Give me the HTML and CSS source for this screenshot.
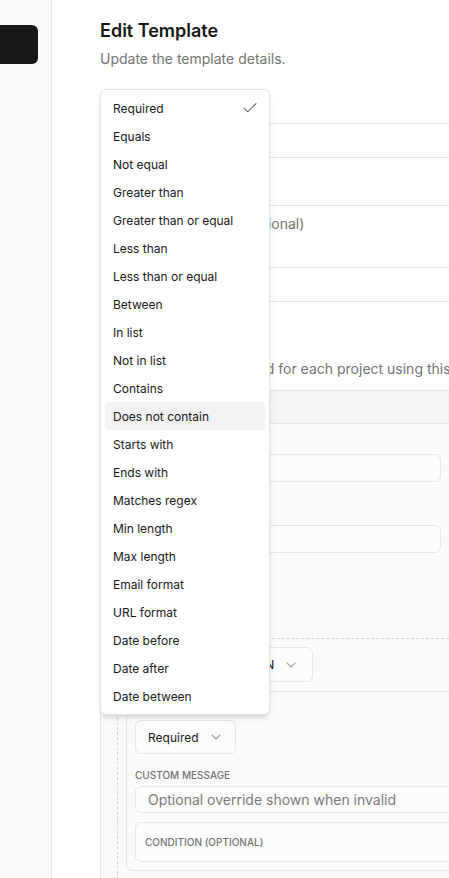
FILE: index.html
```html
<!DOCTYPE html>
<html lang="en">
<head>
  <meta charset="UTF-8" />
  <meta name="viewport" content="width=device-width, initial-scale=1.0"/>
  <title>Edit Template</title>
  <link rel="stylesheet" href="styles.css">
</head>
<body>
  <div class="app">
    <aside class="sidebar">
      <div class="brand"></div>
    </aside>

    <main class="main">
      <div class="panel">
        <h2 class="title">Edit Template</h2>
        <p class="subtitle">Update the template details.</p>

        <form class="form">
          <div class="field">
            <label>Name</label>
            <input class="input" value="Tax Filing" />
          </div>
          <div class="field">
            <label>Description</label>
            <textarea class="input textarea" placeholder="Enter a description (optional)"></textarea>
          </div>

          <section class="fields-section">
            <h3>Template Fields</h3>
            <p class="muted">Template fields to be filled for each project using this template.</p>

            <div class="card">
              <div class="card-head">Field 1</div>
              <div class="card-body">
                <div class="grid">
                  <div class="field small"><label>Label</label><input class="input sm" /></div>
                  <div class="field small"><label>Type</label><input class="input sm" /></div>
                  <div class="field small"><label>Key</label><input class="input sm" /></div>
                  <div class="field small"><label>Default</label><input class="input sm" /></div>
                </div>

                <label class="check-row"><input type="checkbox" /> Required field</label>
                <div class="section-label">Validation rules</div>

                <div class="rule-group">
                  <div class="select">
                    <span>ON FORM SUBMISSION</span>
                    <svg class="chev" width="16" height="16" viewBox="0 0 24 24" fill="none" stroke="currentColor" stroke-width="1.6" stroke-linecap="round" stroke-linejoin="round"><path d="m6 9 6 6 6-6"/></svg>
                  </div>

                  <div class="rule-card">
                    <div class="mini-label">Rule</div>
                    <div class="select rule-select">
                      <span>Required</span>
                      <svg class="chev" width="16" height="16" viewBox="0 0 24 24" fill="none" stroke="currentColor" stroke-width="1.6" stroke-linecap="round" stroke-linejoin="round"><path d="m6 9 6 6 6-6"/></svg>
                    </div>
                    <div class="mini-label msg-label">Custom message</div>
                    <input class="input msg" placeholder="Optional override shown when invalid" />
                    <div class="condition">
                      <div class="mini-label">Condition (optional)</div>
                    </div>
                  </div>
                </div>
              </div>
            </div>
          </section>
        </form>

        <ul class="menu">
          <li>Required
            <svg class="check" width="18" height="18" viewBox="0 0 24 24" fill="none" stroke="currentColor" stroke-width="1.4" stroke-linecap="round" stroke-linejoin="round"><path d="M20 6 9 17l-5-5"/></svg>
          </li>
          <li>Equals</li>
          <li>Not equal</li>
          <li>Greater than</li>
          <li>Greater than or equal</li>
          <li>Less than</li>
          <li>Less than or equal</li>
          <li>Between</li>
          <li>In list</li>
          <li>Not in list</li>
          <li>Contains</li>
          <li class="active">Does not contain</li>
          <li>Starts with</li>
          <li>Ends with</li>
          <li>Matches regex</li>
          <li>Min length</li>
          <li>Max length</li>
          <li>Email format</li>
          <li>URL format</li>
          <li>Date before</li>
          <li>Date after</li>
          <li>Date between</li>
        </ul>
      </div>
    </main>
  </div>
</body>
</html>
```

FILE: styles.css
```css
* {
  box-sizing: border-box;
}
html, body {
  margin: 0;
}
body {
  font-family: Inter, "Noto Sans", sans-serif;
  color: #171717;
  background: #fff;
  overflow: hidden;
}
.app {
  display: flex;
  height: 878px;
}
.sidebar {
  width: 52px;
  flex: none;
  background: #fafafa;
  border-right: 1px solid #e5e5e5;
  padding-top: 25px;
}
.brand {
  width: 48px;
  height: 39px;
  margin-left: -10px;
  background: #171717;
  border-radius: 6px;
}
.main {
  flex: none;
  padding: 17px 0 0 48px;
}
.panel {
  width: 700px;
  position: relative;
}
.title {
  margin: 0;
  font-size: 18px;
  line-height: 28px;
  font-weight: 600;
}
.subtitle {
  margin: 4px 0 0;
  font-size: 14px;
  line-height: 20px;
  color: #737373;
}
.form {
  margin-top: 26px;
}
.field label {
  display: block;
  font-size: 14px;
  font-weight: 500;
  line-height: 20px;
  margin-bottom: 8px;
}
.field + .field {
  margin-top: 19px;
}
.input {
  display: block;
  width: 100%;
  height: 35px;
  border: 1px solid #e5e5e5;
  border-radius: 6px;
  padding: 0 12px;
  font: inherit;
  font-size: 14px;
  color: #171717;
  background: #fff;
}
.input::placeholder {
  color: #737373;
}
.textarea {
  height: 63px;
  padding: 8px 12px;
  line-height: 20px;
  resize: none;
}
.fields-section {
  margin-top: 33px;
  border-top: 1px solid #e5e5e5;
  padding-top: 35px;
}
.fields-section h3 {
  margin: 0;
  font-size: 14px;
  line-height: 20px;
  font-weight: 600;
}
.muted {
  margin: 2px 0 0;
  font-size: 14px;
  line-height: 20px;
  color: #737373;
  white-space: nowrap;
}
.card {
  margin-top: 11px;
  border: 1px solid #e5e5e5;
  border-radius: 8px;
  background: #fafafa;
  overflow: hidden;
}
.card-head {
  height: 33px;
  background: #f5f5f5;
  border-bottom: 1px solid #e5e5e5;
  padding: 0 12px;
  display: flex;
  align-items: center;
  font-size: 12px;
  font-weight: 500;
}
.card-body {
  padding: 12px 16px 16px;
}
.grid {
  display: grid;
  grid-template-columns: 324px 324px;
  column-gap: 16px;
  row-gap: 25px;
}
.grid .field + .field {
  margin-top: 0;
}
.field.small label {
  font-size: 12px;
  line-height: 16px;
  margin-bottom: 2px;
  color: #737373;
}
.input.sm {
  height: 28px;
  font-size: 12px;
  background: #fcfcfc;
}
.check-row {
  display: flex;
  align-items: center;
  gap: 6px;
  margin-top: 16px;
  font-size: 12px;
  line-height: 20px;
}
.check-row input {
  margin: 0;
}
.section-label {
  margin-top: 16px;
  font-size: 12px;
  line-height: 16px;
  font-weight: 500;
}
.rule-group {
  margin-top: 17px;
  border-top: 1px dashed #d4d4d4;
  border-left: 1px dashed #d4d4d4;
  padding: 8px 0 8px 8px;
}
.select {
  display: inline-flex;
  align-items: center;
  gap: 9px;
  height: 35px;
  padding: 0 13px 0 12px;
  border: 1px solid #e5e5e5;
  border-radius: 6px;
  background: #fcfcfc;
  font-size: 12px;
}
.chev {
  color: #a3a3a3;
}
.rule-card {
  margin-top: 9px;
  border: 1px solid #e5e5e5;
  border-radius: 6px;
  background: #fafafa;
  padding: 8px;
}
.mini-label {
  font-size: 10px;
  line-height: 14px;
  font-weight: 500;
  text-transform: uppercase;
  color: #737373;
}
.rule-select {
  height: 34px;
  margin-top: 6px;
  padding-right: 11px;
}
.msg-label {
  margin-top: 14px;
}
.input.msg {
  margin-top: 4px;
  height: 27px;
  background: #fcfcfc;
}
.input.msg::placeholder {
  color: #7a7a7a;
}
.condition {
  margin-top: 9px;
  border: 1px solid #e5e5e5;
  border-radius: 6px;
  padding: 12px 9px;
  background: #fcfcfc;
}
.menu {
  position: absolute;
  top: 72px;
  left: 0;
  width: 170px;
  margin: 0;
  padding: 4px;
  list-style: none;
  background: #fff;
  border: 1px solid #e5e5e5;
  border-radius: 6px;
  box-shadow: 0 4px 6px -1px rgba(0,0,0,0.1), 0 2px 4px -2px rgba(0,0,0,0.1);
  z-index: 10;
}
.menu li {
  display: flex;
  align-items: center;
  height: 28px;
  padding: 0 6px 0 8px;
  font-size: 12px;
  border-radius: 4px;
}
.menu li.active {
  background: #f2f2f2;
}
.menu .check {
  margin-left: auto;
  color: #525252;
}
```
